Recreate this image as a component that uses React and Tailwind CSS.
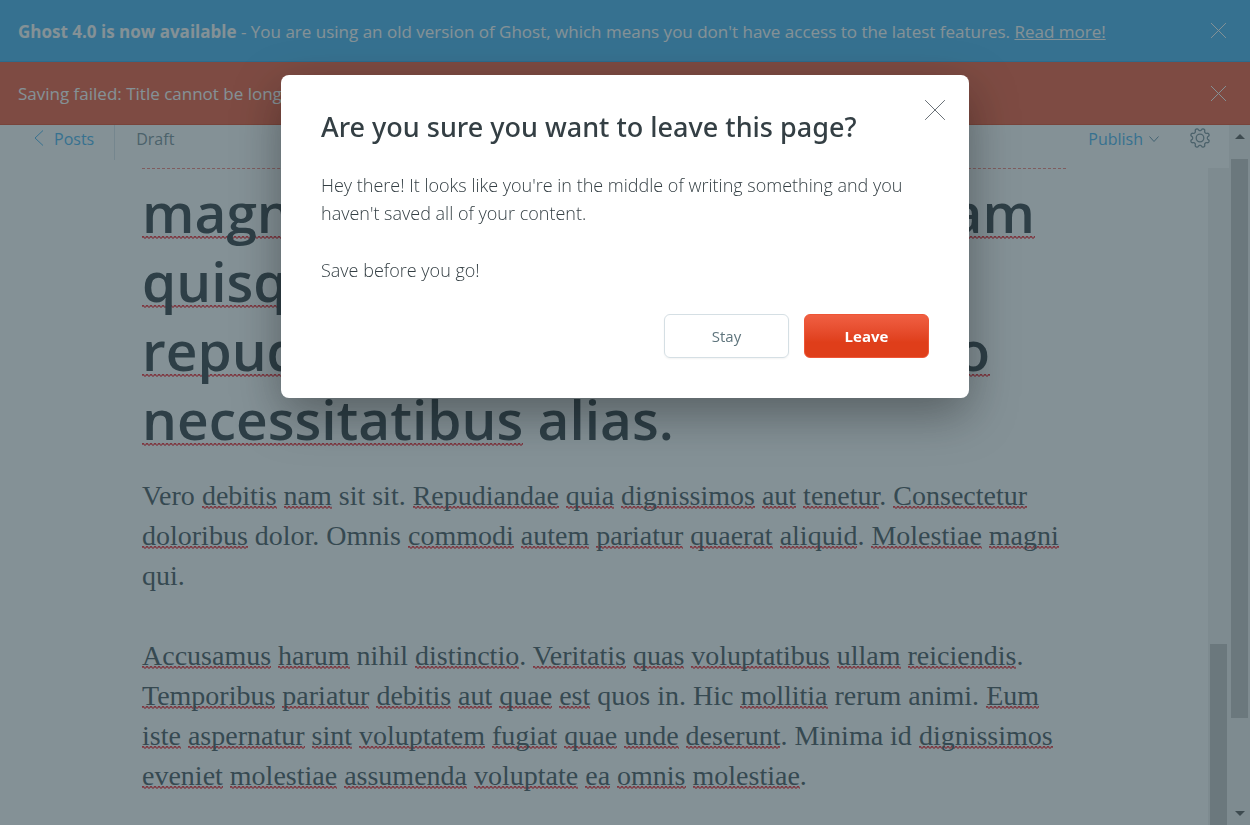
import React from "react";

const titleLines = [
  ["[magnam] [aperiam]", "[totam]"],
  ["[quisquam]", ""],
  ["[repudiandae]", "[explicabo]"],
  ["[necessitatibus] alias.", ""],
];

const paragraphs = [
  [
    "Vero [debitis] [nam] sit sit. [Repudiandae] [quia] [dignissimos] [aut] [tenetur]. [Consectetur]",
    "[doloribus] dolor. Omnis [commodi] [autem] [pariatur] [quaerat] [aliquid]. [Molestiae] [magni]",
    "qui.",
  ],
  [
    "[Accusamus] [harum] nihil [distinctio]. [Veritatis] [quas] [voluptatibus] [ullam] [reiciendis].",
    "[Temporibus] [pariatur] [debitis] [aut] [quae] [est] quos in. Hic [mollitia] rerum animi. [Eum]",
    "[iste] [aspernatur] [sint] [voluptatem] [fugiat] [quae] [unde] [deserunt]. Minima id [dignissimos]",
    "[eveniet] [molestiae] [assumenda] [voluptate] [ea] [omnis] [molestiae].",
  ],
];

// Words in square brackets are flagged by the spell checker.
function Checked({ text, mark }) {
  return text.split(/(\[[^\]]+\])/).map((part, i) =>
    part.startsWith("[") ? (
      <span
        key={i}
        className={`bg-[repeating-linear-gradient(90deg,#f01e28_0_2px,#f01e2830_2px_4px),linear-gradient(#f01e28c0,#f01e28c0),repeating-linear-gradient(90deg,#f01e2800_0_2px,#f01e28a0_2px_4px)] [background-size:100%_1px] bg-no-repeat ${mark}`}
      >
        {part.slice(1, -1)}
      </span>
    ) : (
      part
    )
  );
}

const bodyMark = "[background-position:0_calc(100%_-_4px),0_calc(100%_-_3px),0_calc(100%_-_2px)]";
const titleMark = "[background-position:0_calc(100%_-_12px),0_calc(100%_-_11px),0_calc(100%_-_10px)]";

function Cross({ className }) {
  return (
    <svg viewBox="0 0 24 24" className={className} fill="none" stroke="currentColor" aria-hidden="true">
      <path d="M.5 .5l23 23M23.5 .5l-23 23" strokeLinecap="round" vectorEffect="non-scaling-stroke" />
    </svg>
  );
}

// Eight rounded teeth, sampled around the circle.
const gearPoints = Array.from({ length: 128 }, (_, i) => {
  const angle = (i / 128) * Math.PI * 2;
  const radius = 8.5 - Math.tanh(1.8 * Math.cos(8 * angle)) * 1.2;
  return `${(11 + radius * Math.cos(angle)).toFixed(2)},${(11 + radius * Math.sin(angle)).toFixed(2)}`;
}).join(" ");

function Gear() {
  return (
    <svg viewBox="0 0 22 22" className="size-[22px]" fill="none" stroke="currentColor" strokeWidth="1.3" strokeLinejoin="round" aria-hidden="true">
      <circle cx="11" cy="11" r="3.8" />
      <polygon points={gearPoints} />
    </svg>
  );
}

function Banner({ className, children }) {
  return (
    <div className={`flex shrink-0 items-center justify-between border-b pr-6 pl-[18px] text-[17px] text-white ${className}`}>
      <p className="pt-[2px] whitespace-nowrap">{children}</p>
      <button type="button" aria-label="Dismiss">
        <Cross className="size-[15px]" />
      </button>
    </div>
  );
}

function Editor() {
  return (
    <main className="flex min-h-0 grow">
      <div className="min-w-0 grow overflow-hidden px-[142px]">
        <h1 className="border-t border-dashed border-[#f47c74] pt-2 text-[55px] leading-[69px] font-semibold whitespace-nowrap text-[#2a343a]">
          {titleLines.map(([start, end]) => (
            <span key={start} className="flex justify-between pr-[31px]">
              <span><Checked text={start} mark={titleMark} /></span>
              <span className={start.includes("repud") ? "pr-[45px]" : ""}><Checked text={end} mark={titleMark} /></span>
            </span>
          ))}
        </h1>
        <div className="flex flex-col gap-10 pt-[23px] font-['Liberation_Serif',serif] text-[28px] leading-10 whitespace-nowrap text-[#3c4c54]">
          {paragraphs.map((lines) => (
            <p key={lines[0]}>
              {lines.map((line) => (
                <span key={line} className="block"><Checked text={line} mark={bodyMark} /></span>
              ))}
            </p>
          ))}
        </div>
      </div>
      <div className="flex w-[21px] shrink-0 flex-col bg-[#f1f1f1] px-[2px]">
        <div className="grow-[476]" />
        <div className="grow-[181] bg-[#c1c1c1]" />
      </div>
    </main>
  );
}

function LeaveDialog() {
  return (
    <div className="fixed inset-0 flex items-start justify-center bg-[#324850]/60 pt-[75px]">
      <div
        role="dialog"
        aria-modal="true"
        aria-labelledby="leave-title"
        className="relative w-full max-w-[688px] rounded-lg bg-white p-10 text-[#343f44] shadow-[0_16px_48px_rgba(0,0,0,0.35)]"
      >
        <button type="button" aria-label="Close" className="absolute top-[25px] right-6 text-[#6b7278]">
          <Cross className="size-5" />
        </button>
        <h2 id="leave-title" className="-mt-1 font-['Noto_Sans',sans-serif] text-[27px] leading-8 font-medium">
          Are you sure you want to leave this page?
        </h2>
        <div className="flex flex-col gap-[29px] pt-7 text-[18px] leading-7 font-light">
          <p>
            Hey there! It looks like you're in the middle of writing something and you haven't saved all of your content.
          </p>
          <p>Save before you go!</p>
        </div>
        <div className="flex justify-end gap-[15px] pt-[30px] text-[15px]">
          <button type="button" className="h-11 w-[125px] rounded-md border border-[#d5dfe4] text-[#5f757d] shadow-xs">
            Stay
          </button>
          <button type="button" className="h-11 w-[125px] rounded-md border border-[#ee5536] bg-linear-to-b from-[#f05f42] to-[#df3e1a] to-65% font-bold text-white">
            Leave
          </button>
        </div>
      </div>
    </div>
  );
}

export default function App() {
  return (
    <div className="flex h-screen flex-col overflow-hidden bg-white font-['Open_Sans',sans-serif]">
      <Banner className="h-[62px] border-[#28a0e6] bg-[#3eb0ef]">
        <b>Ghost 4.0 is now available</b> - You are using an old version of Ghost, which means you don't have access to the latest features.{" "}
        <a href="#release" className="underline">Read more!</a>
      </Banner>
      <Banner className="h-[63px] border-[#e0401c] bg-[#f05230]">
        Saving failed: Title cannot be longer than 255 characters.
      </Banner>
      <div className="flex min-h-0 grow">
        <div className="flex min-w-0 grow flex-col">
          <header className="flex h-[43px] shrink-0 items-start justify-between pr-[18px] pl-[34px] text-base">
            <nav className="flex items-start">
              <a href="#posts" className="flex h-[35px] items-start gap-[10px] border-r border-[#dae4ea] pr-5 text-[#3eb0ef]">
                <svg viewBox="0 0 10 16" className="mt-[5px] h-4 w-[10px]" fill="none" stroke="currentColor" aria-hidden="true">
                  <path d="M9 .5L1 8l8 7.5" />
                </svg>
                <span className="leading-7">Posts</span>
              </a>
              <span className="pl-[21px] leading-7 text-[#738a94]">Draft</span>
            </nav>
            <div className="flex items-start gap-[30px]">
              <button type="button" className="flex items-center gap-[6px] leading-7 text-[#3eb0ef]">
                Publish
                <svg viewBox="0 0 10 6" className="h-[6px] w-[10px]" fill="none" stroke="#5b8aa5" aria-hidden="true">
                  <path d="M.5 .5L5 5.5 9.5 .5" />
                </svg>
              </button>
              <button type="button" aria-label="Settings" className="pt-[2px] text-[#738a94]">
                <Gear />
              </button>
            </div>
          </header>
          <Editor />
        </div>
        <div className="flex w-[21px] shrink-0 flex-col items-center bg-[#f1f1f1] px-[2px]">
          <svg viewBox="0 0 10 5" className="my-[9px] h-[5px] w-[10px] shrink-0" fill="#505050" aria-hidden="true"><path d="M0 5l5-5 5 5z" /></svg>
          <div className="mt-[11px] w-full grow-[559] bg-[#c1c1c1]" />
          <div className="grow-[93]" />
          <svg viewBox="0 0 10 5" className="mb-[9px] h-[5px] w-[10px] shrink-0" fill="#505050" aria-hidden="true"><path d="M0 0l5 5 5-5z" /></svg>
        </div>
      </div>
      <LeaveDialog />
    </div>
  );
}
